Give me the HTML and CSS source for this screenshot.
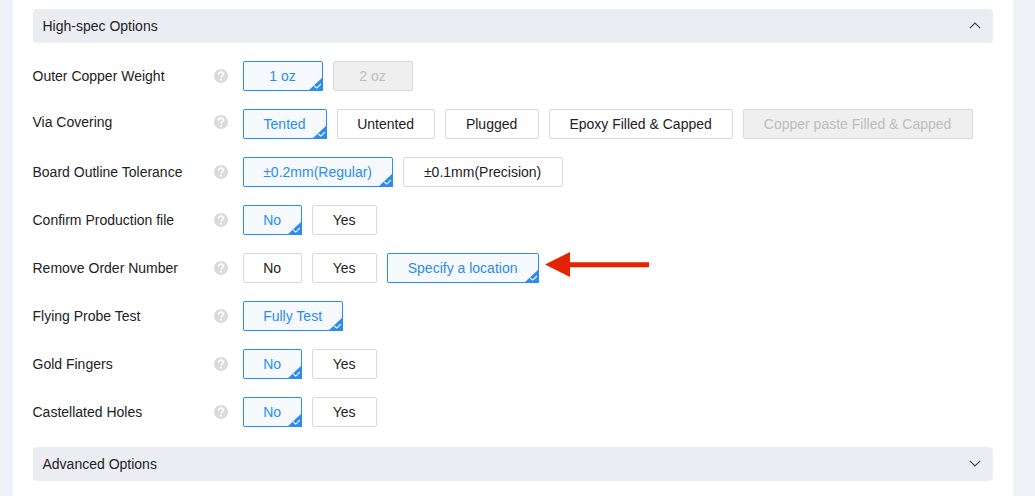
FILE: index.html
```
<!DOCTYPE html>
<html lang="en">
<head>
<meta charset="utf-8">
<title>PCB Options</title>
<link rel="stylesheet" href="styles.css">
</head>
<body>
<svg class="defs" width="0" height="0">
  <symbol id="help" viewBox="0 0 14 14"><circle cx="7" cy="7" r="7" fill="#dbdbdb"/><path d="M4.6 5.5C4.6 2.3 9.5 2.4 9.5 5.2C9.5 7 7.1 6.9 7.1 8.8" fill="none" stroke="#fff" stroke-width="1.6"/><circle cx="7.1" cy="10.8" r="1" fill="#fff"/></symbol>
  <symbol id="corner" viewBox="0 0 15 14"><path d="M15 0V14H0Z" fill="#2a8cf0"/><path d="M6.3 9L8.8 11.1L12.9 7" fill="none" stroke="#fff" stroke-width="1.1"/></symbol>
</svg>
<main class="panel">
  <header class="bar"><span>High-spec Options</span><svg class="chevron" viewBox="0 0 12 7"><path d="M.8 6.2L6 1L11.2 6.2"/></svg></header>
  <section class="options">
    <div class="row"><span class="label">Outer Copper Weight</span><svg class="help"><use href="#help"/></svg><div class="choices"><button class="choice w80 selected">1 oz<svg class="corner"><use href="#corner"/></svg></button><button class="choice w80 disabled">2 oz</button></div></div>
    <div class="row raised"><span class="label">Via Covering</span><svg class="help"><use href="#help"/></svg><div class="choices"><button class="choice w84 selected">Tented<svg class="corner"><use href="#corner"/></svg></button><button class="choice w98">Untented</button><button class="choice w94">Plugged</button><button class="choice w184">Epoxy Filled &amp; Capped</button><button class="choice w230 disabled">Copper paste Filled &amp; Capped</button></div></div>
    <div class="row"><span class="label">Board Outline Tolerance</span><svg class="help"><use href="#help"/></svg><div class="choices"><button class="choice w150 selected">±0.2mm(Regular)<svg class="corner"><use href="#corner"/></svg></button><button class="choice w160">±0.1mm(Precision)</button></div></div>
    <div class="row"><span class="label">Confirm Production file</span><svg class="help"><use href="#help"/></svg><div class="choices"><button class="choice w59 selected">No<svg class="corner"><use href="#corner"/></svg></button><button class="choice w65">Yes</button></div></div>
    <div class="row"><span class="label">Remove Order Number</span><svg class="help"><use href="#help"/></svg><div class="choices"><button class="choice w59">No</button><button class="choice w65">Yes</button><button class="choice w152 selected">Specify a location<svg class="corner"><use href="#corner"/></svg></button></div><svg class="arrow" viewBox="0 0 104 26"><path d="M0 12.5L25 0V10.3H104V15.3H25V25Z"/></svg></div>
    <div class="row"><span class="label">Flying Probe Test</span><svg class="help"><use href="#help"/></svg><div class="choices"><button class="choice w100 selected">Fully Test<svg class="corner"><use href="#corner"/></svg></button></div></div>
    <div class="row"><span class="label">Gold Fingers</span><svg class="help"><use href="#help"/></svg><div class="choices"><button class="choice w59 selected">No<svg class="corner"><use href="#corner"/></svg></button><button class="choice w65">Yes</button></div></div>
    <div class="row"><span class="label">Castellated Holes</span><svg class="help"><use href="#help"/></svg><div class="choices"><button class="choice w59 selected">No<svg class="corner"><use href="#corner"/></svg></button><button class="choice w65">Yes</button></div></div>
  </section>
  <header class="bar"><span>Advanced Options</span><svg class="chevron" viewBox="0 0 12 7"><path d="M.8 .8L6 6L11.2 .8"/></svg></header>
</main>
</body>
</html>
```
FILE: styles.css
```
* { box-sizing: border-box; }
body { margin: 0; height: 496px; overflow: hidden; background: #f1f2f7; color: #222; font: 14px/20px "Liberation Sans", Arial, sans-serif; }
.defs { position: absolute; }
.panel { width: 1000px; height: 496px; margin-left: 13px; padding: 9px 20px 0; background: #fff; }
.bar { display: flex; align-items: center; justify-content: space-between; height: 34px; padding: 0 12px 0 9.5px; border-radius: 4px; background: #ecedf3; }
.chevron { width: 12px; height: 7px; margin-top: -1px; fill: none; stroke: #444; stroke-width: 1.1; }
.options { display: flex; flex-direction: column; gap: 18px; padding: 18px 0 20px; }
.row { display: flex; align-items: center; height: 30px; }
.label { width: 181.5px; margin-left: -.5px; white-space: nowrap; }
.help { width: 14px; height: 14px; margin-right: 15px; }
.raised .label, .raised .help { margin-bottom: 4px; }
.choices { display: flex; gap: 10px; }
.choice { position: relative; height: 30px; padding: 0 .8px 0 0; border: 1px solid #d9d9d9; border-radius: 2px; background: #fff; color: #222; font: inherit; white-space: nowrap; }
.selected { border-color: #2a8cf0; background: #f6faff; color: #2a8cf0; }
.disabled { background: #efefef; color: #bdbdbd; }
.corner { position: absolute; right: -1px; bottom: -1px; width: 15px; height: 14px; }
.arrow { width: 104px; height: 26px; margin: -6px 0 0 6px; fill: #e42400; }
.w59 { width: 59px; }
.w65 { width: 65px; }
.w80 { width: 80px; }
.w84 { width: 84px; }
.w94 { width: 94px; }
.w98 { width: 98px; }
.w100 { width: 100px; }
.w150 { width: 150px; }
.w152 { width: 152px; }
.w160 { width: 160px; }
.w184 { width: 184px; }
.w230 { width: 230px; }
```
